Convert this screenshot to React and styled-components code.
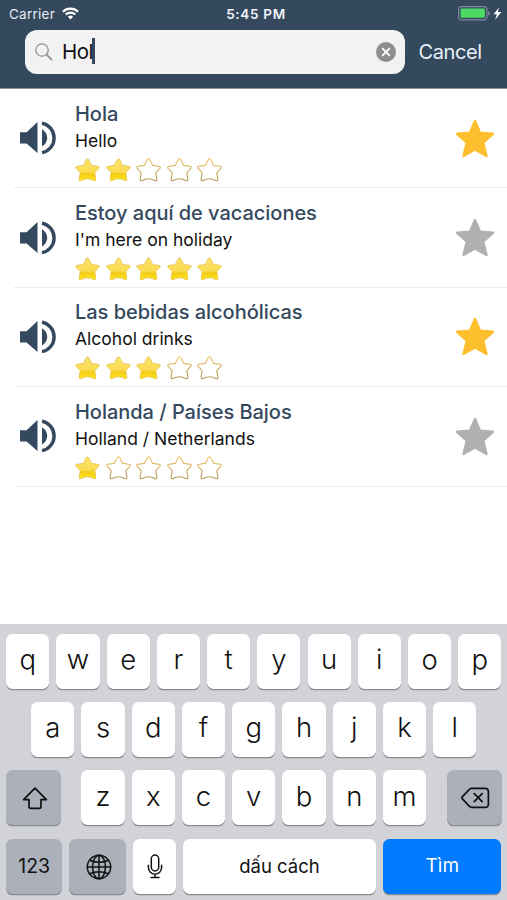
import React, { useState } from 'react';
import styled, { createGlobalStyle } from 'styled-components';

const NAVY = '#34495e';

const phrases = [
    { title: 'Hola', detail: 'Hello', rating: 2, favorite: true },
    { title: 'Estoy aquí de vacaciones', detail: "I'm here on holiday", rating: 5, favorite: false },
    { title: 'Las bebidas alcohólicas', detail: 'Alcohol drinks', rating: 3, favorite: true },
    { title: 'Holanda / Países Bajos', detail: 'Holland / Netherlands', rating: 1, favorite: false },
];

const STAR = 'M12.5 .8Q13.3 .8 13.8 1.8L16.7 7.4L23 8.3Q25.2 8.8 23.8 10.4L19.8 14.6L20.9 21.3Q21 23.2 19.2 22.7Q12.5 18.9 5.8 22.7Q4 23.2 4.1 21.3L5.2 14.6L1.2 10.4Q-.2 8.8 2 8.3L8.3 7.4L11.2 1.8Q11.7 .8 12.5 .8Z';

function RatingStar({ filled }) {
    return (
        <svg width="25" height="24" viewBox="0 0 25 24">
            <defs>
                <linearGradient id="gold" x1="0" y1="0" x2="0" y2="1">
                    <stop offset="0" stopColor="#fbe36a" />
                    <stop offset=".6" stopColor="#fbdc50" />
                    <stop offset=".68" stopColor="#f3cb17" />
                    <stop offset="1" stopColor="#ffe61c" />
                </linearGradient>
                <linearGradient id="rim" x1="0" y1="0" x2="0" y2="1">
                    <stop offset="0" stopColor="#f0c766" />
                    <stop offset="1" stopColor="#b49a58" />
                </linearGradient>
            </defs>
            <path
                d={STAR}
                fill={filled ? 'url(#gold)' : '#fff'}
                stroke={filled ? '#e3bc45' : 'url(#rim)'}
                strokeWidth={filled ? 0.7 : 1.1}
                strokeLinejoin="round"
            />
        </svg>
    );
}

function SpeakerIcon() {
    return (
        <svg width="36" height="34" viewBox="0 0 36 34" fill={NAVY}>
            <path d="M0 11.3h6.6L17.5 1v31L6.6 22.6H0z" />
            <path d="M22 8.2q5.2 3.1 5.2 8.6t-5.2 8.6z" />
            <path d="M22 2.1a15.1 15.1 0 0 1 0 29.6" fill="none" stroke={NAVY} strokeWidth="3.4" />
        </svg>
    );
}

function FavoriteStar({ active }) {
    const color = active ? '#fdbf2d' : '#b0b0b0';
    return (
        <svg width="40" height="39" viewBox="0 0 40 39">
            <path
                d="M20 2L25 13.6L38 14.8L28.2 23.6L31.5 37L20 30.4L8.5 37L11.8 23.6L2 14.8L15 13.6Z"
                fill={color}
                stroke={color}
                strokeWidth="2.4"
                strokeLinejoin="round"
            />
        </svg>
    );
}

function StatusBar() {
    return (
        <Status>
            <Carrier>
                Carrier
                <svg width="17" height="13" viewBox="0 0 17 13" fill="none" stroke="#fff">
                    <path d="M.9 4.7a10.8 10.8 0 0 1 15.2 0" strokeWidth="2.2" />
                    <path d="M3.7 7.6a6.8 6.8 0 0 1 9.6 0" strokeWidth="2.1" />
                    <path d="M8.5 12.4L5.9 9.8a3.7 3.7 0 0 1 5.2 0z" fill="#fff" stroke="none" />
                </svg>
            </Carrier>
            <Clock>5:45 PM</Clock>
            <Battery>
                <svg width="45" height="15" viewBox="0 0 45 15">
                    <rect x=".6" y=".6" width="28.3" height="13.2" rx="3" fill="none" stroke="#7c8b99" strokeWidth="1.2" />
                    <rect x="2.6" y="2.6" width="24.3" height="9.2" rx="1" fill="#4cd964" />
                    <path d="M30.2 5q1.8.7 1.8 2.3t-1.8 2.3z" fill="#7c8b99" />
                    <path d="M41 1.4L35.6 8.2h3.2l-1.6 5.6L43.4 6h-3.5z" fill="#fff" />
                </svg>
            </Battery>
        </Status>
    );
}

function PhraseRow({ phrase }) {
    return (
        <Row>
            <SpeakerIcon />
            <Info>
                <Title>{phrase.title}</Title>
                <Detail>{phrase.detail}</Detail>
                <Rating>
                    {[1, 2, 3, 4, 5].map(n => <RatingStar key={n} filled={n <= phrase.rating} />)}
                </Rating>
            </Info>
            <FavoriteStar active={phrase.favorite} />
        </Row>
    );
}

function Keyboard({ onType, onDelete }) {
    const letters = row => row.split('').map(c => (
        <Key key={c} onClick={() => onType(c)}>{c}</Key>
    ));

    return (
        <Keys>
            <KeyRow>{letters('qwertyuiop')}</KeyRow>
            <KeyRow>{letters('asdfghjkl')}</KeyRow>
            <KeyRow $spread>
                <IconKey $width="55px" $dark>
                    <svg width="26" height="23" viewBox="0 0 26 23" fill="none" stroke="#111" strokeWidth="1.7" strokeLinejoin="round">
                        <path d="M13 1.2L24.4 12.6H19V19.6q0 1.8-1.8 1.8H8.8Q7 21.4 7 19.6V12.6H1.6Z" />
                    </svg>
                </IconKey>
                <Letters>{letters('zxcvbnm')}</Letters>
                <IconKey $width="55px" $dark onClick={onDelete}>
                    <svg width="29" height="22" viewBox="0 0 29 22" fill="none" stroke="#111" strokeWidth="1.7" strokeLinejoin="round" strokeLinecap="round">
                        <path d="M10.6 1.3H24q3.4 0 3.4 3.4v12.2q0 3.4-3.4 3.4H10.6q-1.3 0-2.2-1L1.2 11.7q-.7-.9 0-1.8l7.2-7.6q.9-1 2.2-1z" />
                        <path d="M13.2 6.6l8 8M21.2 6.6l-8 8" />
                    </svg>
                </IconKey>
            </KeyRow>
            <KeyRow>
                <Key $width="56.3px" $dark $size="19.5px">123</Key>
                <IconKey $width="56.3px" $dark>
                    <svg width="26" height="26" viewBox="0 0 26 26" fill="none" stroke="#111" strokeWidth="1.5">
                        <circle cx="13" cy="13" r="11.7" />
                        <ellipse cx="13" cy="13" rx="6.4" ry="11.7" />
                        <path d="M13 1v24M1 13h24M3.8 6.2q9.2 4.2 18.4 0M3.8 19.8q9.2-4.2 18.4 0" />
                    </svg>
                </IconKey>
                <IconKey $width="43px">
                    <svg width="16" height="25" viewBox="0 0 16 25" fill="none" stroke="#111" strokeWidth="1.5" strokeLinecap="round">
                        <rect x="4.3" y="1.1" width="7.4" height="15.8" rx="3.7" />
                        <path d="M1.4 11.2v2.4a6.6 6.6 0 0 0 13.2 0v-2.4M8 20.4v3.2M4 23.6h8" />
                    </svg>
                </IconKey>
                <Key $width="193.4px" $size="18.5px">dấu cách</Key>
                <Key $width="118.3px" $size="19px" $blue>Tìm</Key>
            </KeyRow>
        </Keys>
    );
}

function App() {
    const [query, setQuery] = useState('Hol');

    return (
        <Screen>
            <GlobalStyle />
            <Header>
                <StatusBar />
                <SearchBar>
                    <SearchField>
                        <svg width="18" height="18" viewBox="0 0 18 18" fill="none" stroke="#929295" strokeWidth="1.3">
                            <circle cx="7" cy="7" r="6.2" />
                            <path d="M11.5 11.5l5.6 5.6" strokeWidth="1.8" />
                        </svg>
                        <Query>{query}</Query>
                        <Caret />
                        <Clear onClick={() => setQuery('')}>
                            <svg width="20" height="20" viewBox="0 0 20 20">
                                <circle cx="10" cy="10" r="10" fill="#8e8e90" />
                                <path d="M6.2 6.2l7.6 7.6M13.8 6.2l-7.6 7.6" stroke="#fff" strokeWidth="1.9" />
                            </svg>
                        </Clear>
                    </SearchField>
                    <Cancel onClick={() => setQuery('')}>Cancel</Cancel>
                </SearchBar>
            </Header>
            <List>
                {phrases.map(phrase => <PhraseRow key={phrase.title} phrase={phrase} />)}
            </List>
            <Keyboard
                onType={c => setQuery(q => q + c)}
                onDelete={() => setQuery(q => q.slice(0, -1))}
            />
        </Screen>
    );
}

const GlobalStyle = createGlobalStyle`
    body {
        margin: 0;
        overflow: hidden;
    }

    * {
        box-sizing: border-box;
    }

    svg {
        display: block;
        flex: none;
    }

    button {
        border: none;
        padding: 0;
        background: none;
        font-family: inherit;
    }
`;

const Screen = styled.div`
    display: flex;
    flex-direction: column;
    width: 507px;
    height: 900px;
    background-color: #fff;
    font-family: Inter, Roboto, sans-serif;
`;

const Header = styled.header`
    height: 89px;
    background-color: ${NAVY};
    border-bottom: 1px solid #8d93a0;
    color: #fff;
`;

const Status = styled.div`
    display: grid;
    grid-template-columns: 1fr auto 1fr;
    align-items: center;
    height: 27px;
    padding: 0 4px 0 9px;
    font-size: 13.5px;
`;

const Carrier = styled.div`
    display: flex;
    align-items: center;
    gap: 7px;
    color: #e6ebf0;
    letter-spacing: 0.25px;
`;

const Clock = styled.div`
    font-weight: 600;
    letter-spacing: 0.7px;
    color: #f0f4f7;
`;

const Battery = styled.div`
    display: flex;
    justify-content: flex-end;
`;

const SearchBar = styled.div`
    display: flex;
    align-items: center;
    padding: 3.4px 0 0 25px;
`;

const SearchField = styled.div`
    display: flex;
    align-items: center;
    width: 379.5px;
    height: 44px;
    padding: 0 9px 0 10px;
    border-radius: 12px;
    background-color: #f2f2f2;
`;

const Query = styled.span`
    margin-left: 9px;
    padding-bottom: 2px;
    font-size: 20.5px;
    letter-spacing: -0.5px;
    color: #111;
`;

const Caret = styled.span`
    width: 2.5px;
    height: 26px;
    margin: 0 0 2px -1px;
    background-color: ${NAVY};
`;

const Clear = styled.button`
    margin-left: auto;
`;

const Cancel = styled.button`
    margin-left: 14px;
    font-size: 20px;
    letter-spacing: -0.4px;
    color: #e9f1f8;
`;

const List = styled.main`
    flex: 1;
`;

const Row = styled.section`
    display: flex;
    align-items: center;
    height: 99.4px;
    margin-left: 14px;
    padding: 0 12px 0 6px;
    border-bottom: 1.5px solid #ececee;
`;

const Info = styled.div`
    flex: 1;
    margin-left: 19px;
    padding-top: 5px;
`;

const Title = styled.h2`
    margin: 0;
    font-size: 20px;
    font-weight: 450;
    line-height: 28px;
    letter-spacing: -0.03px;
    color: ${NAVY};
`;

const Detail = styled.p`
    margin: 0;
    font-size: 17.5px;
    line-height: 26px;
    letter-spacing: 0;
    color: #111;
`;

const Rating = styled.div`
    display: flex;
    gap: 5.6px;
    margin-top: 4px;
`;

const Keys = styled.footer`
    display: flex;
    flex-direction: column;
    gap: 13.4px;
    height: 276px;
    padding: 9.5px 5.5px 0 6px;
    background-color: #d1d3d9;
`;

const KeyRow = styled.div`
    display: flex;
    justify-content: ${props => props.$spread ? "space-between" : "center"};
    gap: 7.05px;
`;

const Letters = styled.div`
    display: flex;
    gap: 7.05px;
`;

const keyColor = props => {
    if (props.$blue) return "#007aff";
    return props.$dark ? "#abb0ba" : "#fff";
};

const Key = styled.button`
    display: flex;
    flex: none;
    align-items: center;
    justify-content: center;
    width: ${props => props.$width ? props.$width : "43.2px"};
    height: 55px;
    padding-bottom: ${props => props.$size ? "1px" : "4px"};
    border-radius: 6.5px;
    background-color: ${keyColor};
    box-shadow: 0 1.3px 0 #898b90;
    font-size: ${props => props.$size ? props.$size : "27.5px"};
    font-weight: ${props => props.$size ? 400 : 330};
    color: ${props => props.$blue ? "#fff" : "#111"};
`;

const IconKey = styled(Key)`
    padding: 1px 0 0 2px;
`;

export default App;
